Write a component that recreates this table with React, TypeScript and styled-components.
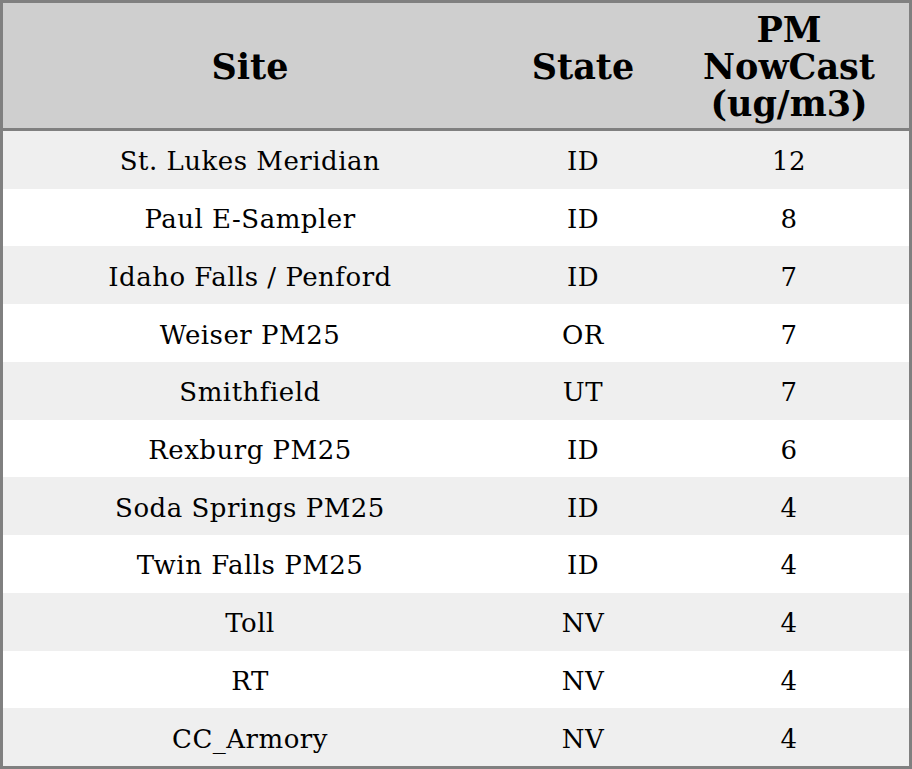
import styled, { createGlobalStyle } from "styled-components"

interface Row {
    site: string
    state: string
    pm: number
}

const rows: Row[] = [
    { site: "St. Lukes Meridian", state: "ID", pm: 12 },
    { site: "Paul E-Sampler", state: "ID", pm: 8 },
    { site: "Idaho Falls / Penford", state: "ID", pm: 7 },
    { site: "Weiser PM25", state: "OR", pm: 7 },
    { site: "Smithfield", state: "UT", pm: 7 },
    { site: "Rexburg PM25", state: "ID", pm: 6 },
    { site: "Soda Springs PM25", state: "ID", pm: 4 },
    { site: "Twin Falls PM25", state: "ID", pm: 4 },
    { site: "Toll", state: "NV", pm: 4 },
    { site: "RT", state: "NV", pm: 4 },
    { site: "CC_Armory", state: "NV", pm: 4 },
]

const GlobalStyle = createGlobalStyle`
    html, body {
        margin: 0;
        padding: 0;
        background: #ffffff;
    }
    body {
        font-family: "DejaVu Serif", serif;
    }
`

const App: React.FC = () => {
    return (
        <>
            <GlobalStyle />
            <Table>
                <Header>
                    <HeadCell>Site</HeadCell>
                    <HeadCell>State</HeadCell>
                    <HeadCell>PM<br />NowCast<br />(ug/m3)</HeadCell>
                </Header>
                {rows.map((r, i) => (
                    <DataRow key={i} $striped={i % 2 === 0}>
                        <Cell>{r.site}</Cell>
                        <Cell>{r.state}</Cell>
                        <Cell>{r.pm}</Cell>
                    </DataRow>
                ))}
            </Table>
        </>
    )
}

const Table = styled.div`
    box-sizing: border-box;
    width: 912px;
    height: 769px;
    border: 3px solid #808080;
    display: grid;
    grid-template-rows: 128px repeat(11, 1fr);
    color: #000;
`

const Header = styled.div`
    display: grid;
    grid-template-columns: 494px 172px 1fr;
    background-color: #cfcfcf;
    border-bottom: 3px solid #808080;
`

const HeadCell = styled.div`
    display: flex;
    align-items: center;
    justify-content: center;
    text-align: center;
    font-weight: 700;
    font-size: 35px;
    line-height: 37px;
    padding-top: 2px;
`

const DataRow = styled.div<{ $striped: boolean }>`
    display: grid;
    grid-template-columns: 494px 172px 1fr;
    background-color: ${(p) => (p.$striped ? "#efefef" : "#ffffff")};
`

const Cell = styled.div`
    display: flex;
    align-items: center;
    justify-content: center;
    font-size: 26px;
    letter-spacing: 0.5px;
    padding-top: 3px;
`

export default App
